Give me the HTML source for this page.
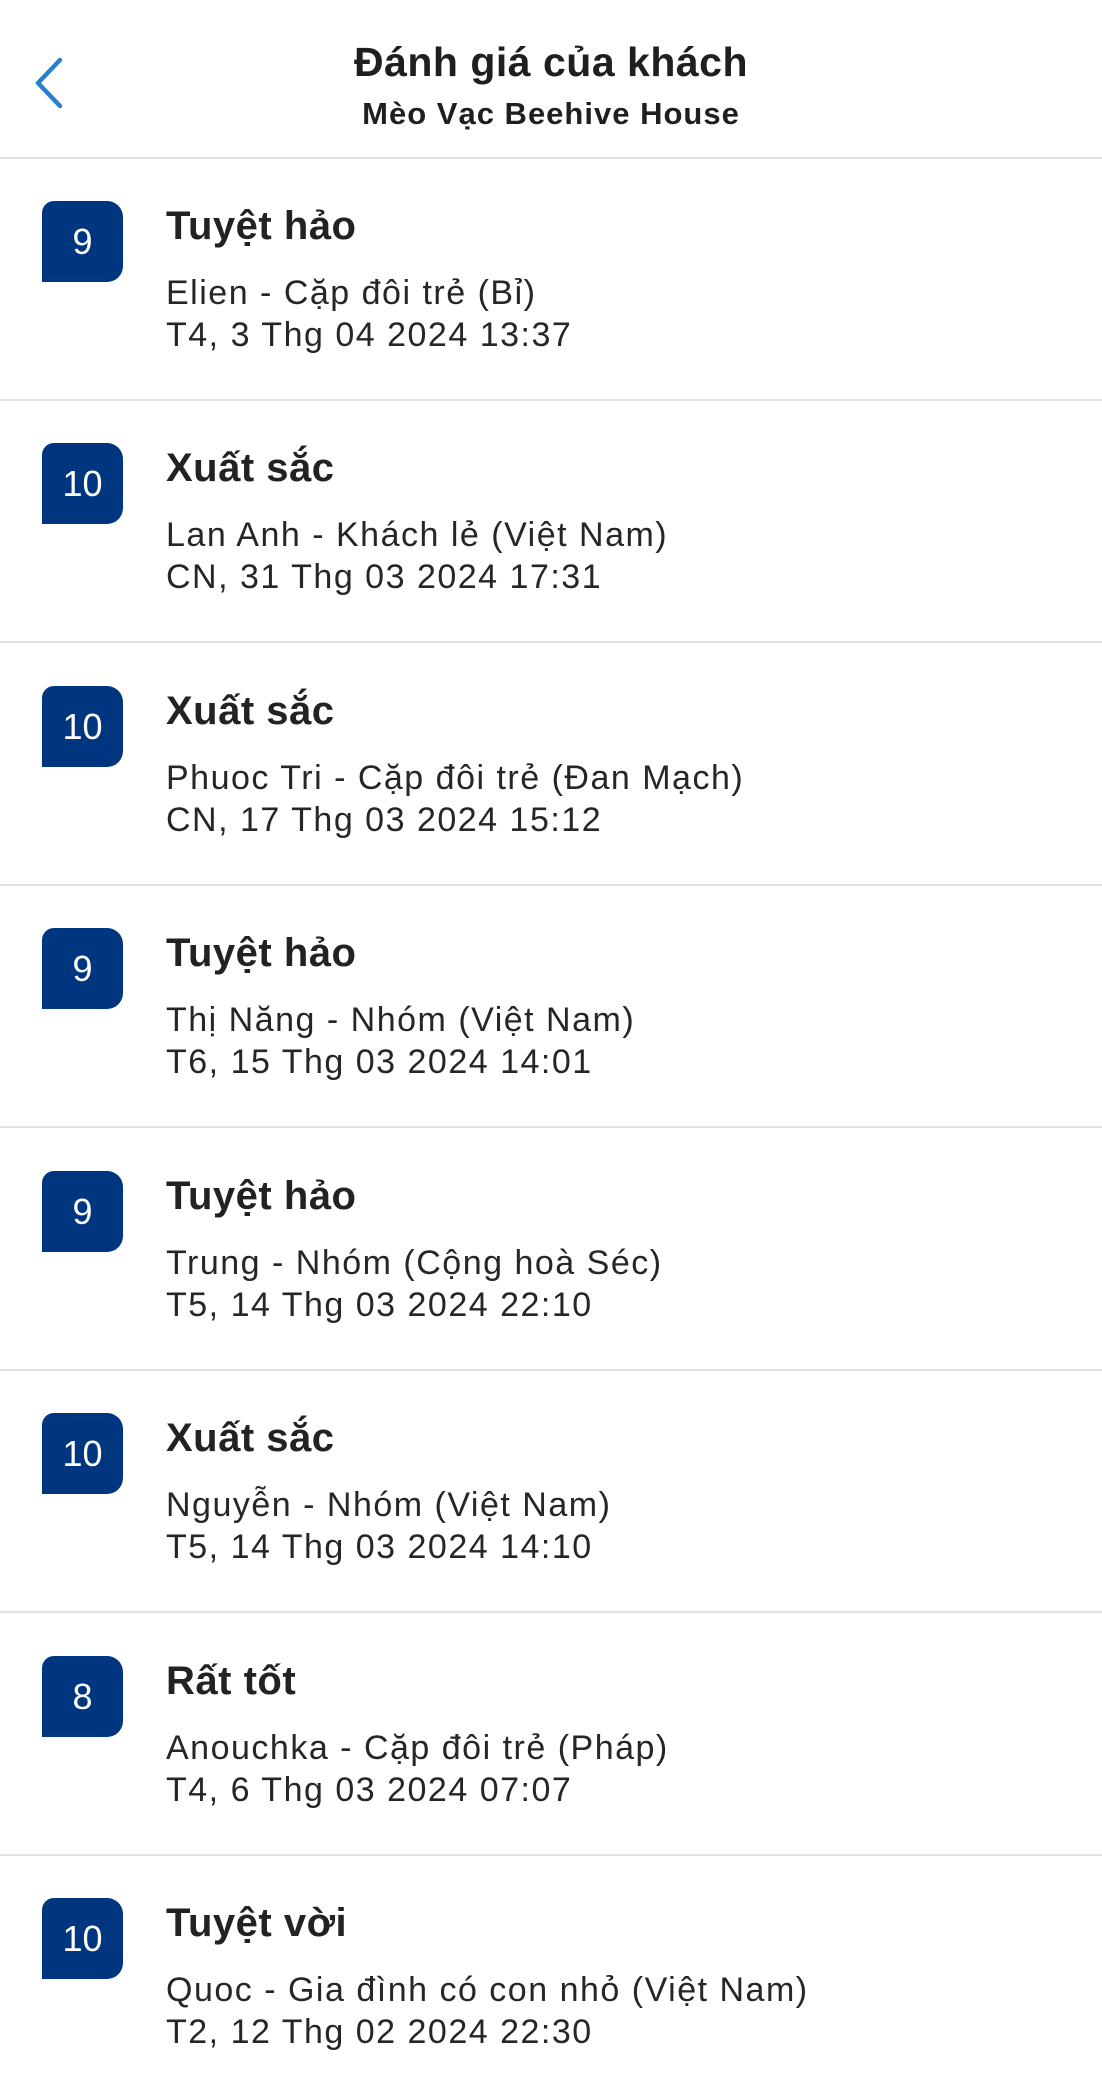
<!DOCTYPE html>
<html><head><meta charset="utf-8"><style>
*{margin:0;padding:0;box-sizing:border-box}
body{width:1102px;height:2048px;overflow:hidden;background:#fff;font-family:"Liberation Sans",sans-serif;color:#262626;position:relative}
.t{position:absolute;white-space:nowrap;line-height:1}
.hd{left:0;width:1102px;text-align:center;font-weight:bold;color:#1f1f1f}
.div{position:absolute;left:0;width:1102px;height:2px;background:#e2e2e2}
.b{position:absolute;left:42px;width:81px;height:81px;background:#003580;border-radius:12px 16px 16px 0;color:#fff;font-size:36px;display:flex;align-items:center;justify-content:center}
.ti{left:166px;font-size:40px;font-weight:bold;color:#222;letter-spacing:0.5px}
.l{left:166px;font-size:34px;color:#262626;letter-spacing:1.5px}
</style></head><body>
<svg style="position:absolute;left:30px;top:56px" width="40" height="56" viewBox="0 0 40 56"><path d="M30 4 L8 27 L30 50" fill="none" stroke="#2a7fd0" stroke-width="4.5" stroke-linecap="round" stroke-linejoin="round"/></svg>
<div class="t hd" style="top:42px;font-size:41px;letter-spacing:0.5px">Đánh giá của khách</div>
<div class="t hd" style="top:98px;font-size:31px;letter-spacing:1px">Mèo Vạc Beehive House</div>
<div class="div" style="top:157px"></div>

<div style="position:absolute;left:0;top:158px;width:1102px;height:243px">
<div class="b" style="top:43px">9</div>
<div class="t ti" style="top:48px">Tuyệt hảo</div>
<div class="t l" style="top:118px">Elien - Cặp đôi trẻ (Bỉ)</div>
<div class="t l" style="top:160px">T4, 3 Thg 04 2024 13:37</div>
<div class="div" style="top:241px"></div></div>

<div style="position:absolute;left:0;top:400px;width:1102px;height:243px">
<div class="b" style="top:43px">10</div>
<div class="t ti" style="top:48px">Xuất sắc</div>
<div class="t l" style="top:118px">Lan Anh - Khách lẻ (Việt Nam)</div>
<div class="t l" style="top:160px">CN, 31 Thg 03 2024 17:31</div>
<div class="div" style="top:241px"></div></div>

<div style="position:absolute;left:0;top:643px;width:1102px;height:243px">
<div class="b" style="top:43px">10</div>
<div class="t ti" style="top:48px">Xuất sắc</div>
<div class="t l" style="top:118px">Phuoc Tri - Cặp đôi trẻ (Đan Mạch)</div>
<div class="t l" style="top:160px">CN, 17 Thg 03 2024 15:12</div>
<div class="div" style="top:241px"></div></div>

<div style="position:absolute;left:0;top:885px;width:1102px;height:243px">
<div class="b" style="top:43px">9</div>
<div class="t ti" style="top:48px">Tuyệt hảo</div>
<div class="t l" style="top:118px">Thị Năng - Nhóm (Việt Nam)</div>
<div class="t l" style="top:160px">T6, 15 Thg 03 2024 14:01</div>
<div class="div" style="top:241px"></div></div>

<div style="position:absolute;left:0;top:1128px;width:1102px;height:243px">
<div class="b" style="top:43px">9</div>
<div class="t ti" style="top:48px">Tuyệt hảo</div>
<div class="t l" style="top:118px">Trung - Nhóm (Cộng hoà Séc)</div>
<div class="t l" style="top:160px">T5, 14 Thg 03 2024 22:10</div>
<div class="div" style="top:241px"></div></div>

<div style="position:absolute;left:0;top:1370px;width:1102px;height:243px">
<div class="b" style="top:43px">10</div>
<div class="t ti" style="top:48px">Xuất sắc</div>
<div class="t l" style="top:118px">Nguyễn - Nhóm (Việt Nam)</div>
<div class="t l" style="top:160px">T5, 14 Thg 03 2024 14:10</div>
<div class="div" style="top:241px"></div></div>

<div style="position:absolute;left:0;top:1613px;width:1102px;height:243px">
<div class="b" style="top:43px">8</div>
<div class="t ti" style="top:48px">Rất tốt</div>
<div class="t l" style="top:118px">Anouchka - Cặp đôi trẻ (Pháp)</div>
<div class="t l" style="top:160px">T4, 6 Thg 03 2024 07:07</div>
<div class="div" style="top:241px"></div></div>

<div style="position:absolute;left:0;top:1855px;width:1102px;height:243px">
<div class="b" style="top:43px">10</div>
<div class="t ti" style="top:48px">Tuyệt vời</div>
<div class="t l" style="top:118px">Quoc - Gia đình có con nhỏ (Việt Nam)</div>
<div class="t l" style="top:160px">T2, 12 Thg 02 2024 22:30</div>
</div>
</body></html>
